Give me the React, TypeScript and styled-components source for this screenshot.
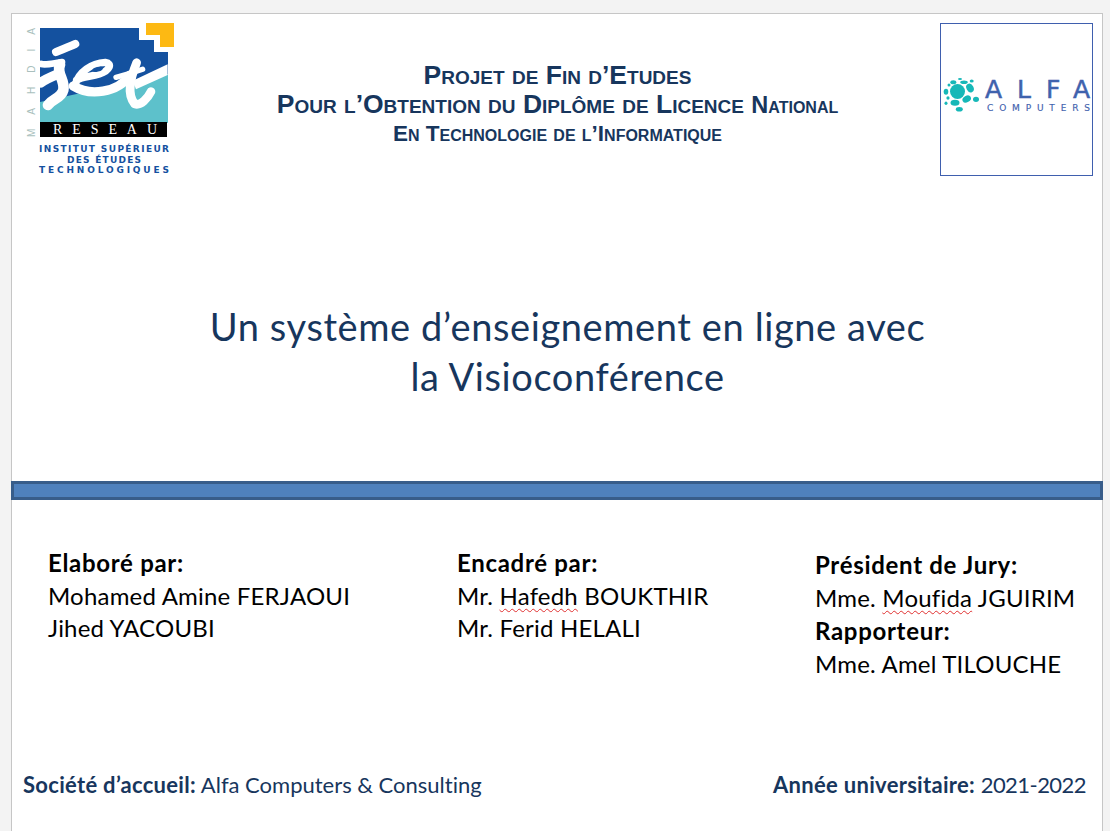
import styled, { createGlobalStyle } from 'styled-components';

const GlobalStyle = createGlobalStyle`
  html, body {
    margin: 0;
    padding: 0;
    height: 831px;
    overflow: hidden;
    background: #f3f3f3;
  }
`;

const Workspace = styled.div`
  height: 831px;
  padding: 13px 7px 0 11px;
  box-sizing: border-box;
  overflow: hidden;
`;

const Slide = styled.main`
  box-sizing: border-box;
  height: 860px;
  background: #fff;
  border: 1px solid #c6c6c6;
  display: flex;
  flex-direction: column;
  font-family: Lato, 'Open Sans', sans-serif;
  font-variant-ligatures: none;
`;

const Header = styled.header`
  display: flex;
  justify-content: space-between;
  align-items: flex-start;
  height: 163px;
  padding: 9px 9px 0 13px;
  box-sizing: border-box;
`;

const Heading = styled.div`
  flex: 1;
  padding-top: 38px;
  text-align: center;
  color: #17365d;
  font-family: 'Liberation Sans', Arial, sans-serif;
  font-weight: 700;
  font-variant: small-caps;
`;

const HeadingLine = styled.div<{ $size: number; $height: number }>`
  font-size: ${(p) => p.$size}px;
  line-height: ${(p) => p.$height}px;
`;

const SmallerWord = styled.span`
  font-size: 23.5px;
`;

const AlfaBox = styled.div`
  width: 153px;
  height: 153px;
  box-sizing: border-box;
  border: 1px solid #3f5fae;
`;

const Title = styled.h1`
  margin: 124px 0 0;
  padding-left: 21px;
  text-align: center;
  font-size: 38px;
  letter-spacing: 0.6px;
  line-height: 50px;
  font-weight: 400;
  color: #17365d;
`;

const Bar = styled.div`
  height: 19px;
  margin: 80px -1px 0;
  box-sizing: border-box;
  background: #4f81bd;
  border: 3px solid #385d8a;
`;

const People = styled.section`
  display: grid;
  grid-template-columns: 409px 358px 1fr;
  padding: 47px 0 0 36px;
  font-size: 24px;
  letter-spacing: 0.2px;
  color: #000;
`;

const Column = styled.div<{ $shift?: number; $leading: number }>`
  padding-top: ${(p) => p.$shift ?? 0}px;
  line-height: ${(p) => p.$leading}px;
  white-space: nowrap;
`;

const Strong = styled.div`
  font-weight: 700;
  letter-spacing: 0.7px;
`;

const Misspelled = styled.span`
  text-decoration: underline wavy #e03030 1px;
  text-underline-offset: 3px;
`;

const Footer = styled.footer`
  display: flex;
  justify-content: space-between;
  padding: 90px 16px 0 11px;
  font-size: 22px;
  line-height: 30px;
  color: #17365d;
`;

const FooterLabel = styled.b`
  font-weight: 700;
  letter-spacing: 0.3px;
`;

const YearValue = styled.span`
  letter-spacing: -0.55px;
`;

const IsetLogo = () => (
  <svg width="150" height="155" viewBox="25 23 150 155">
    <polygon points="40,28 139,28 139,40 154,40 154,52 168,52 168,123 40,123" fill="#14519f" />
    <polygon points="40,102 168,74 168,123 40,123" fill="#5dc1cb" />
    <polygon points="146,23 174,23 174,47 160,47 160,35 146,35" fill="#fdb913" />
    {/* script letters, in the 3x coordinates of the crop */}
    <g transform="translate(36 30) scale(0.3333)">
      <g fill="none" stroke="#fff" strokeLinecap="round" strokeLinejoin="round">
        <path d="M60 66 C80 58 100 50 118 42" strokeWidth="24" />
        <path d="M16 102 C30 106 50 100 78 96" strokeWidth="20" />
        <path d="M72 104 C60 130 88 150 82 180 C76 205 50 205 36 225" strokeWidth="32" />
        <path d="M14 158 C25 150 42 142 66 132" strokeWidth="30" />
        <path d="M118 162 C130 125 165 100 208 97 C230 100 222 122 190 132 C165 140 140 140 122 150" strokeWidth="22" />
        <path d="M112 168 C160 198 245 190 282 135" strokeWidth="28" />
        <path d="M302 98 C285 140 270 190 296 222 C315 228 335 205 345 185" strokeWidth="26" />
        <path d="M240 142 C280 132 300 125 320 118" strokeWidth="16" />
      </g>
      <polygon points="290,152 395,103 395,135 300,178" fill="#fff" />
      <ellipse cx="185" cy="118" rx="16" ry="7" fill="#14519f" transform="rotate(-15 185 118)" />
    </g>
    <rect x="40" y="122" width="127" height="15" fill="#000" />
    <text x="53" y="134" fill="#fff" fontFamily="'Liberation Serif', serif" fontSize="14" textLength="104">RESEAU</text>
    <text x="35" y="137" fill="#a9bfbd" fontFamily="'Liberation Sans', sans-serif" fontSize="10" textLength="109" transform="rotate(-90 35 137)">MAHDIA</text>
    <g fill="#14519f" fontFamily="'DejaVu Sans', sans-serif" fontWeight="700" fontSize="9">
      <text x="39" y="152" textLength="130">INSTITUT SUPÉRIEUR</text>
      <text x="67" y="163" textLength="74">DES ÉTUDES</text>
      <text x="39" y="173" textLength="130">TECHNOLOGIQUES</text>
    </g>
  </svg>
);

const AlfaLogo = () => (
  <svg width="151" height="151" viewBox="941 24 151 151">
    <g fill="#16b8b8">
      <circle cx="957.500" cy="91.500" r="7.500" />
      <ellipse cx="970" cy="88" rx="3.500" ry="4.500" transform="rotate(-30 970 88)" />
      <ellipse cx="966.700" cy="99" rx="4.500" ry="3.300" transform="rotate(-30 966.700 99)" />
      <ellipse cx="976" cy="99.300" rx="3" ry="2.600" />
      <ellipse cx="955" cy="102.700" rx="4.500" ry="3" />
      <ellipse cx="959.300" cy="109.300" rx="3.500" ry="2.300" />
      <ellipse cx="964" cy="82.300" rx="3.800" ry="1.800" />
      <ellipse cx="971.700" cy="81" rx="2" ry="1.600" />
      <ellipse cx="960" cy="79" rx="2" ry="1" />
      <ellipse cx="953.300" cy="82.300" rx="3" ry="2" />
      <ellipse cx="949" cy="85" rx="1.500" ry="1.500" />
      <ellipse cx="946" cy="91.700" rx="2.300" ry="3" />
      <ellipse cx="948" cy="98" rx="1.600" ry="1.800" />
      <ellipse cx="946" cy="103.300" rx="1.500" ry="1.800" />
    </g>
    <g fill="#3f62ad" stroke="#3f62ad" fontFamily="'DejaVu Sans', sans-serif">
      <text x="985" y="98" fontSize="25" strokeWidth="0.500" textLength="105">ALFA</text>
      <text x="987" y="111" fontSize="9" strokeWidth="0.150" textLength="103">COMPUTERS</text>
    </g>
  </svg>
);

export default function App() {
  return (
    <>
      <GlobalStyle />
      <Workspace>
        <Slide>
          <Header>
            <IsetLogo />
            <Heading>
              <HeadingLine $size={26.5} $height={28.5}>Projet de Fin d’Etudes</HeadingLine>
              <HeadingLine $size={26.5} $height={28.5}>
                Pour l’Obtention du Diplôme de Licence <SmallerWord>National</SmallerWord>
              </HeadingLine>
              <HeadingLine $size={22.5} $height={30}>En Technologie de l’Informatique</HeadingLine>
            </Heading>
            <AlfaBox>
              <AlfaLogo />
            </AlfaBox>
          </Header>
          <Title>
            Un système d’enseignement en ligne avec
            <br />
            la Visioconférence
          </Title>
          <Bar />
          <People>
            <Column $leading={32.5}>
              <Strong>Elaboré par:</Strong>
              <div>Mohamed Amine FERJAOUI</div>
              <div>Jihed YACOUBI</div>
            </Column>
            <Column $leading={32.5}>
              <Strong>Encadré par:</Strong>
              <div>
                Mr. <Misspelled>Hafedh</Misspelled> BOUKTHIR
              </div>
              <div>Mr. Ferid HELALI</div>
            </Column>
            <Column $shift={1} $leading={33}>
              <Strong>Président de Jury:</Strong>
              <div>
                Mme. <Misspelled>Moufida</Misspelled> JGUIRIM
              </div>
              <Strong>Rapporteur:</Strong>
              <div>Mme. Amel TILOUCHE</div>
            </Column>
          </People>
          <Footer>
            <div>
              <FooterLabel>Société d’accueil:</FooterLabel> Alfa Computers &amp; Consulting
            </div>
            <div>
              <FooterLabel>Année universitaire:</FooterLabel> <YearValue>2021-2022</YearValue>
            </div>
          </Footer>
        </Slide>
      </Workspace>
    </>
  );
}
